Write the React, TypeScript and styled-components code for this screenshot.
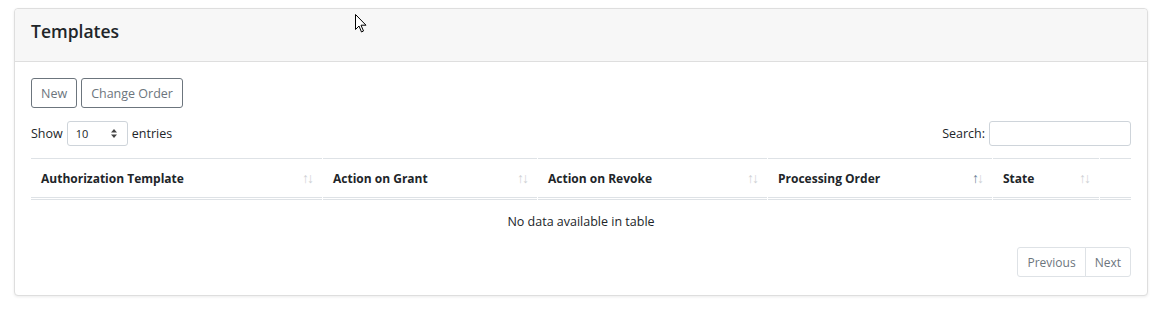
import React from "react";
import styled, { createGlobalStyle } from "styled-components";

const GlobalStyle = createGlobalStyle`
  body {
    margin: 0;
    background: #ffffff;
    font-family: "Open Sans", "Noto Sans", Arial, sans-serif;
    color: #212529;
  }
`;

const Page = styled.div`
  position: relative;
  padding: 8px 16px 16px 14px;
`;

const Card = styled.section`
  border: 1px solid #dedede;
  border-radius: 4px;
  background: #fff;
  box-shadow: 0 1px 3px rgba(0, 0, 0, 0.08);
`;

const CardHeader = styled.header`
  height: 53px;
  box-sizing: border-box;
  display: flex;
  align-items: flex-start;
  padding: 10px 16px 0;
  background: #f7f7f7;
  border-bottom: 1px solid #dedede;
  border-radius: 4px 4px 0 0;
`;

const Title = styled.h2`
  margin: 0;
  font-size: 17.5px;
  line-height: 24px;
  font-weight: 600;
  color: #212529;
`;

const CardBody = styled.div`
  padding: 16px 16px 18px;
`;

const Toolbar = styled.div`
  display: flex;
  gap: 4px;
`;

const OutlineButton = styled.button`
  height: 30px;
  padding: 0 9px;
  font-family: inherit;
  font-size: 12.5px;
  color: #6c757d;
  background: #fff;
  border: 1px solid #6c757d;
  border-radius: 3px;
`;

const Controls = styled.div`
  margin-top: 13px;
  display: flex;
  justify-content: space-between;
  align-items: center;
  font-size: 12.5px;
`;

const Label = styled.label`
  display: flex;
  align-items: center;
  gap: 2px;
`;

const Select = styled.div`
  width: 61px;
  height: 25px;
  box-sizing: border-box;
  border: 1px solid #ced4da;
  border-radius: 3px;
  display: flex;
  align-items: center;
  justify-content: space-between;
  padding: 0 10px 0 8px;
  margin: 0 2px;
  font-size: 11px;
`;

const Input = styled.input`
  width: 142px;
  height: 25px;
  box-sizing: border-box;
  border: 1px solid #ced4da;
  border-radius: 3px;
  margin-left: 2px;
`;

const Table = styled.table`
  margin-top: 12px;
  margin-left: -1px;
  width: calc(100% + 2px);
  border-collapse: separate;
  border-spacing: 1px 0;
  font-size: 12.5px;
`;

const Th = styled.th<{ $w?: number }>`
  width: ${(p) => (p.$w ? `${p.$w}px` : "auto")};
  height: 38px;
  padding: 0 8px 0 10px;
  text-align: left;
  font-size: 12px;
  font-weight: 700;
  border-top: 1px solid #dee2e6;
  border-bottom: 3px double #dee2e6;
`;

const ThInner = styled.div`
  display: flex;
  justify-content: space-between;
  align-items: center;
`;

const Sort = styled.span`
  font-size: 14px;
  font-weight: 400;
  letter-spacing: -2px;
  line-height: 1;
  padding-right: 2px;
`;

const Arrow = styled.span<{ $on?: boolean }>`
  color: ${(p) => (p.$on ? "#6b7f95" : "#cfd2d5")};
`;

const Td = styled.td`
  height: 40px;
  text-align: center;
`;

const Pager = styled.div`
  margin-top: 5px;
  display: flex;
  justify-content: flex-end;
`;

const PageLink = styled.span<{ $first?: boolean }>`
  height: 30px;
  box-sizing: border-box;
  padding: 0 9px;
  display: flex;
  align-items: center;
  font-size: 12px;
  color: #6c757d;
  border: 1px solid #dee2e6;
  margin-left: ${(p) => (p.$first ? "0" : "-1px")};
  border-radius: ${(p) => (p.$first ? "3px 0 0 3px" : "0 3px 3px 0")};
`;

const Cursor = styled.svg`
  position: absolute;
  left: 355px;
  top: 14px;
`;

const columns = [
  { name: "Authorization Template", w: 273 },
  { name: "Action on Grant", w: 196 },
  { name: "Action on Revoke", w: 211 },
  { name: "Processing Order", w: 206, active: true },
  { name: "State", w: 88 },
];

export default function App() {
  return (
    <>
      <GlobalStyle />
      <Page>
        <Card>
          <CardHeader>
            <Title>Templates</Title>
          </CardHeader>
          <CardBody>
            <Toolbar>
              <OutlineButton>New</OutlineButton>
              <OutlineButton>Change Order</OutlineButton>
            </Toolbar>
            <Controls>
              <Label>
                Show
                <Select>
                  <span>10</span>
                  <svg width="6" height="9" viewBox="0 0 6 9">
                    <path d="M3 0 L6 3.5 H0 Z M3 9 L0 5.5 H6 Z" fill="#444" />
                  </svg>
                </Select>
                entries
              </Label>
              <Label>
                Search:
                <Input />
              </Label>
            </Controls>
            <Table>
              <thead>
                <tr>
                  {columns.map((c) => (
                    <Th key={c.name} $w={c.w}>
                      <ThInner>
                        {c.name}
                        <Sort>
                          <Arrow $on={c.active}>↑</Arrow>
                          <Arrow>↓</Arrow>
                        </Sort>
                      </ThInner>
                    </Th>
                  ))}
                  <Th />
                </tr>
              </thead>
              <tbody>
                <tr>
                  <Td colSpan={6}>No data available in table</Td>
                </tr>
              </tbody>
            </Table>
            <Pager>
              <PageLink $first>Previous</PageLink>
              <PageLink>Next</PageLink>
            </Pager>
          </CardBody>
        </Card>
        <Cursor width="12" height="19" viewBox="0 0 12 19">
          <path
            d="M0.5 0.5 V15.5 L4 12 L6.5 18 L8.5 17 L6 11.2 H11 Z"
            fill="#fff"
            stroke="#000"
            strokeWidth="1"
            strokeLinejoin="round"
          />
        </Cursor>
      </Page>
    </>
  );
}
